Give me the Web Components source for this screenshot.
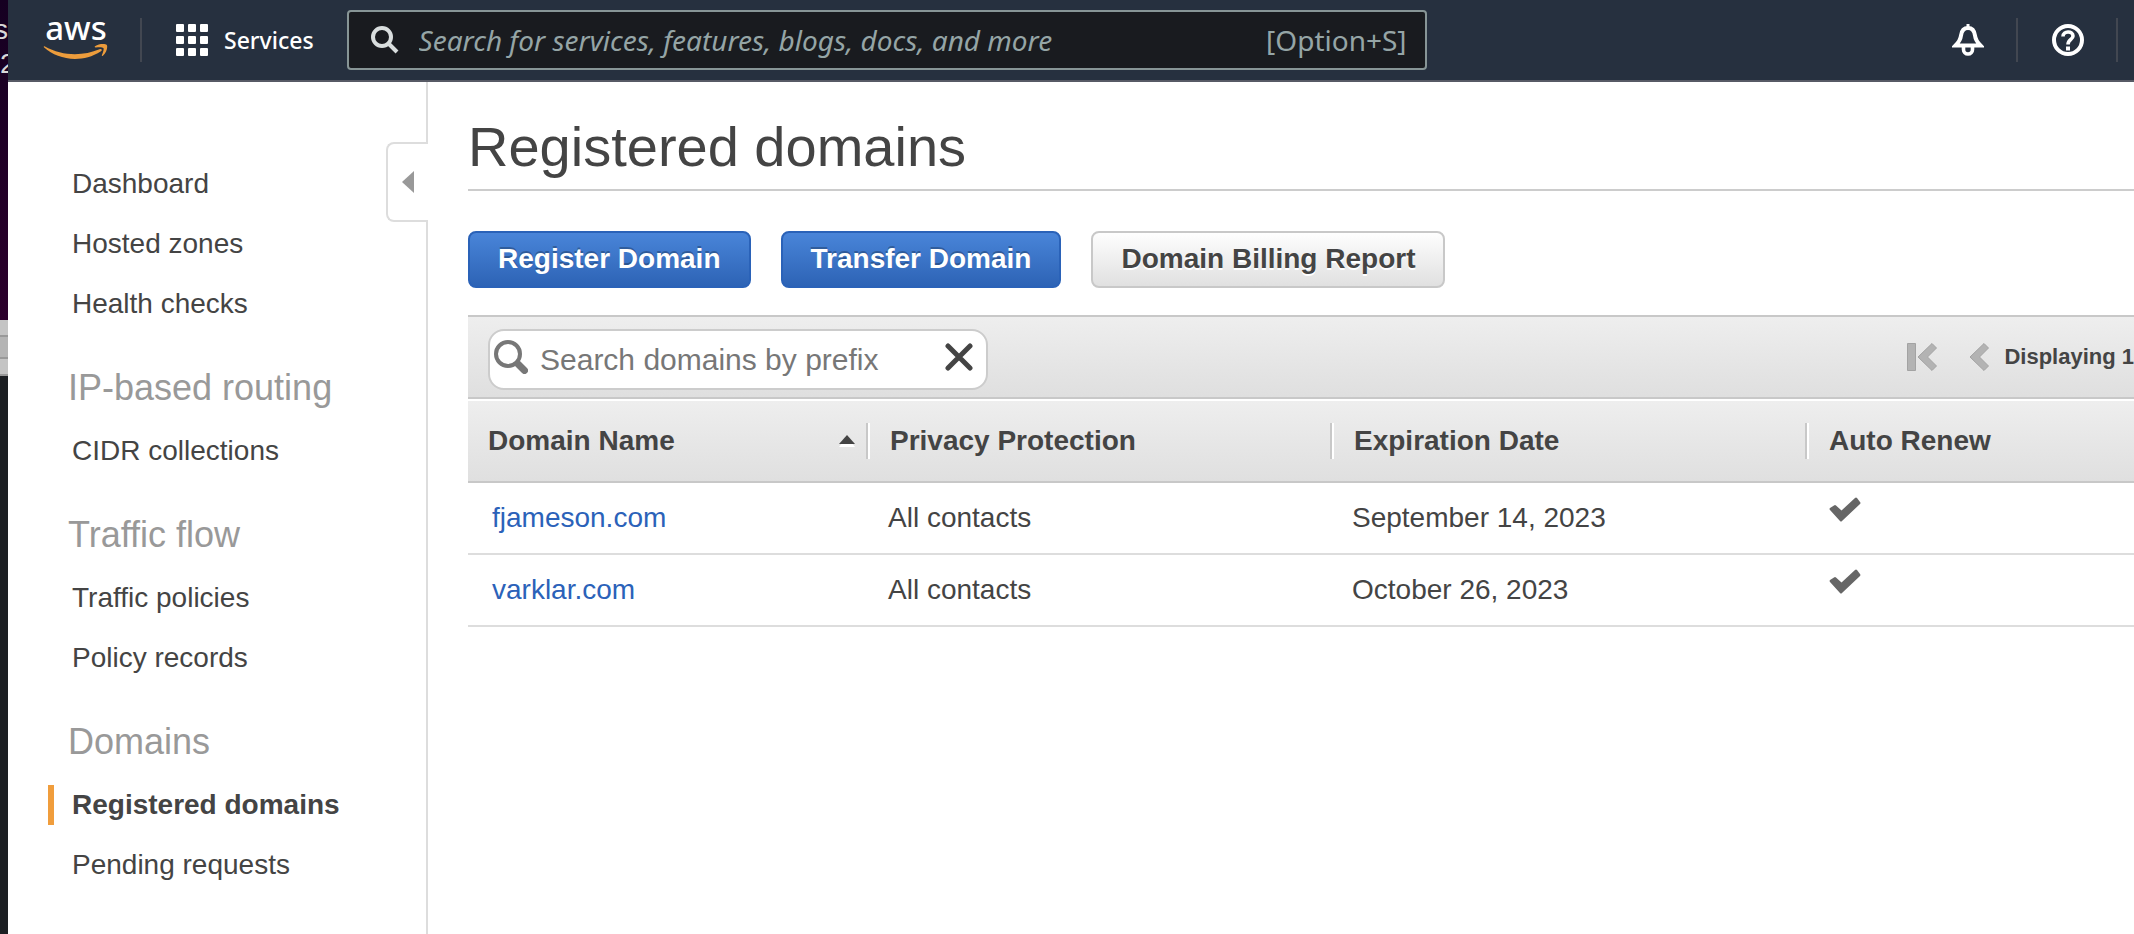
<!DOCTYPE html>
<html lang="en">
<head>
<meta charset="utf-8">
<title>Route 53 - Registered domains</title>
<style>
  html, body { margin: 0; }
  body {
    min-height: 100vh;
    overflow-x: hidden;
    background: #fff;
    color: #444;
    font: 28px/40px "Liberation Sans", Arial, sans-serif;
  }
</style>
</head>
<body>
<console-shell>
  <desktop-edge slot="edge"></desktop-edge>
  <top-bar slot="top"></top-bar>
  <side-nav slot="side">
    <nav-item>Dashboard</nav-item>
    <nav-item>Hosted zones</nav-item>
    <nav-item>Health checks</nav-item>
    <nav-heading>IP-based routing</nav-heading>
    <nav-item>CIDR collections</nav-item>
    <nav-heading>Traffic flow</nav-heading>
    <nav-item>Traffic policies</nav-item>
    <nav-item>Policy records</nav-item>
    <nav-heading>Domains</nav-heading>
    <nav-item current>Registered domains</nav-item>
    <nav-item>Pending requests</nav-item>
  </side-nav>
  <page-title>Registered domains</page-title>
  <button-row>
    <action-button primary>Register Domain</action-button>
    <action-button primary>Transfer Domain</action-button>
    <action-button>Domain Billing Report</action-button>
  </button-row>
  <table-toolbar></table-toolbar>
  <domain-table></domain-table>
</console-shell>

<script>
const define = (name, html, setup) => {
  const template = document.createElement('template');
  template.innerHTML = html;
  customElements.define(name, class extends HTMLElement {
    constructor() {
      super();
      this.attachShadow({ mode: 'open' }).append(template.content.cloneNode(true));
    }
    connectedCallback() { if (setup) setup(this, this.shadowRoot); }
  });
};

define('console-shell', `
<style>
  :host { display: grid; grid-template-columns: 8px 420px minmax(0, 1fr); grid-template-rows: auto 1fr; min-height: 100vh; }
  .edge { grid-row: 1 / 3; display: grid; }
  header { grid-column: 2 / 4; }
  .side { display: grid; }
  main { padding: 30px 0 40px 40px; min-width: 0; }
</style>
<div class="edge"><slot name="edge"></slot></div>
<header><slot name="top"></slot></header>
<div class="side"><slot name="side"></slot></div>
<main><slot></slot></main>`);

/* Sliver of the desktop that shows beside the browser window */
define('desktop-edge', `
<style>
  :host { display: flex; flex-direction: column; overflow: hidden; background: #1c1f23; }
  .terminal { height: 320px; box-sizing: border-box; padding-top: 13px; background: linear-gradient(#150021, #2c002c); color: #d8d8d8;
    font: 28px/34px "Liberation Sans", Arial, sans-serif; display: flex; flex-direction: column; align-items: flex-end; }
  .two { align-self: flex-start; }
  .bar { height: 54px; border-bottom: 2px solid #999; background: #c4c4c4; display: flex; align-items: center; }
  .bar i { flex: 1; height: 20px; border: solid #999; border-width: 2px 0; background: #b4b4b4; }
</style>
<div class="terminal"><span>s</span><span class="two">2</span></div>
<div class="bar"><i></i></div>`);

define('top-bar', `
<style>
  :host { display: flex; align-items: center; height: 80px; padding-left: 35px; background: #26303f; border-bottom: 2px solid #575a65;
    color: #fff; font-family: "Noto Sans", "Open Sans", sans-serif; }
  a, button { color: inherit; text-decoration: none; background: none; border: 0; padding: 0; font: inherit; display: flex; align-items: center; }
  svg { display: block; flex: none; }
  .logo { flex-direction: column; width: 66px; padding-bottom: 4px; font-size: 33px; line-height: 24px; font-weight: 500; }
  .logo span { height: 28px; }
  hr { width: 2px; height: 44px; margin: 0; border: 0; background: #424751; flex: none; }
  .logo + hr { margin: 0 34px 0 31px; }
  .services { gap: 16px; font-size: 23px; line-height: 32px; font-weight: 500; }
  .search { flex: 0 1 1080px; min-width: 0; display: flex; align-items: center; gap: 20px; height: 60px; margin-left: 33px; padding: 0 18px 0 22px; box-sizing: border-box;
    border: 2px solid #879596; border-radius: 4px; background: #191b1f; color: #95a5a6; }
  input { flex: 1; min-width: 0; border: 0; padding: 0; outline: 0; background: none; color: inherit; font: italic 28px/40px "Noto Sans", "Open Sans", sans-serif; }
  input::placeholder { color: inherit; opacity: 1; }
  kbd { font: 28px/40px "Noto Sans", "Open Sans", sans-serif; }
  .tools { margin-left: auto; padding-right: 16px; display: flex; align-items: center; gap: 32px; }
  .tools hr:first-of-type { margin-right: 2px; }
</style>
<a class="logo" href="#" aria-label="AWS home"><span>aws</span>
  <svg width="66" height="16" viewBox="0 0 66 16" fill="#ec9c3c"><path d="M1.500 2.200C20 12.500 40 12 56.500 5.200C58.500 4.500 59.800 6 58 7.300C49 13 41 15 32 15C20 15 9 10.500 1.200 3.600C.5 2.700 .8 1.900 1.500 2.200Z"/><path d="M52 2.300C56 -.5 62.500 -.3 63.800 .9C65 2.500 63.500 9 59.900 11.700C59.200 12.200 58.500 11.900 58.900 11.100C60 8.500 61.200 5 60.400 4C59.500 2.900 55.500 3.200 52.900 3.400C51.800 3.500 51.300 2.800 52 2.300Z"/></svg>
</a>
<hr>
<button class="services">
  <svg width="32" height="32" fill="#fff"><g id="r"><rect width="8" height="8" rx="1"/><rect x="12" width="8" height="8" rx="1"/><rect x="24" width="8" height="8" rx="1"/></g><use href="#r" y="12"/><use href="#r" y="24"/></svg>
  Services
</button>
<label class="search">
  <svg width="28" height="28" fill="none" stroke="#d9dede" stroke-width="4"><circle cx="11" cy="11" r="9"/><path d="M17 17L26 26"/></svg>
  <input type="search" aria-label="Search AWS" placeholder="Search for services, features, blogs, docs, and more">
  <kbd>[Option+S]</kbd>
</label>
<div class="tools">
  <button aria-label="Notifications">
    <svg width="32" height="32" fill="none" stroke="#fff" stroke-width="4"><path d="M16 0V4" stroke-width="3"/><path d="M16 4C11 4 9.500 7.500 9 11.500C8.500 16 7 18 3.500 21.500H28.500C25 18 23.500 16 23 11.500C22.500 7.500 21 4 16 4Z"/><path d="M11.500 23V25.500A4.500 4.500 0 0 0 20.500 25.500V23" stroke-width="3.600"/></svg>
  </button>
  <hr>
  <button aria-label="Help">
    <svg width="32" height="32" fill="none" stroke="#fff" stroke-width="4"><circle cx="16" cy="16" r="14"/><path d="M11 12.500C11 6.500 21 6.500 21 12C21 15.500 16 15.500 16 20.500" stroke-width="3.600"/><path d="M14 24.500H18"/></svg>
  </button>
  <hr>
</div>`);

define('side-nav', `
<style>
  :host { display: block; position: relative; border-right: 2px solid #ddd; }
  nav { padding: 72px 32px 20px 40px; }
  button { position: absolute; top: 60px; right: -2px; width: 42px; height: 80px; padding: 0 0 0 14px; box-sizing: border-box;
    border: 2px solid #ddd; border-right: 0; border-radius: 8px 0 0 8px; background: #fff; }
  svg { display: block; }
</style>
<nav aria-label="Route 53"><slot></slot></nav>
<button aria-label="Collapse navigation"><svg width="12" height="22" fill="#999"><path d="M12 0V22L0 11Z"/></svg></button>`);

define('nav-item', `
<style>
  :host { display: block; padding: 10px 0; }
  a { display: block; border-left: 6px solid transparent; padding-left: 18px; color: #444; text-decoration: none; line-height: 40px; white-space: nowrap; }
  :host([current]) a { border-color: #f09d3c; font-weight: bold; }
</style>
<a href="#"><slot></slot></a>`);

define('nav-heading', `
<style>
  :host { display: block; padding: 33px 0 12px 20px; }
  h2 { margin: 0; font-size: 36px; line-height: 42px; font-weight: normal; color: #999; white-space: nowrap; }
</style>
<h2><slot></slot></h2>`);

define('page-title', `
<style>
  :host { display: block; border-bottom: 2px solid #ccc; }
  h1 { margin: 0; padding-bottom: 7px; font-size: 56px; line-height: 70px; font-weight: normal; }
</style>
<h1><slot></slot></h1>`);

define('button-row', `
<style>:host { display: flex; flex-wrap: wrap; gap: 30px; padding: 40px 0 27px; }</style>
<slot></slot>`);

define('action-button', `
<style>
  :host { display: block; }
  button { display: block; padding: 8px 28px 9px; border: 2px solid #c8c8c8; border-radius: 8px; background: linear-gradient(#fff, #dfdfdf) border-box;
    color: #444; font: bold 28px/36px "Liberation Sans", Arial, sans-serif; text-shadow: 0 2px #fff; white-space: nowrap; }
  :host([primary]) button { border-color: #2a62b8; background: linear-gradient(#4a86da, #2c62b4) border-box; color: #fff; text-shadow: 0 -2px rgba(0, 0, 0, .25); }
</style>
<button><slot></slot></button>`);

define('table-toolbar', `
<style>
  :host { display: flex; align-items: center; justify-content: space-between; height: 80px; padding-left: 20px; border: solid #c8c8c8; border-width: 2px 0; margin-bottom: 2px;
    background: linear-gradient(#eee, #dfdfdf); }
  .filter { display: flex; align-items: center; gap: 12px; width: 500px; height: 61px; margin-top: 5px; box-sizing: border-box; padding: 0 13px 5px 4px;
    border: 2px solid #ccc; border-radius: 16px; background: #fff; }
  input { flex: 1; min-width: 0; height: 40px; border: 0; padding: 5px 0 0; outline: 0; background: none; color: #444; font: 30px/40px "Liberation Sans", Arial, sans-serif; }
  input::placeholder { color: #777; opacity: 1; }
  button { display: block; padding: 0; border: 0; background: none; }
  svg { display: block; }
  .pager { display: flex; align-items: center; gap: 15px; font-size: 22px; line-height: 30px; font-weight: bold; white-space: nowrap; }
  .pager button + button { margin-left: 17px; }
</style>
<label class="filter">
  <svg width="34" height="34" fill="none" stroke="#777" stroke-linecap="round"><circle cx="14" cy="14" r="12" stroke-width="4"/><path d="M24 24L30.500 30.500" stroke-width="7"/></svg>
  <input type="text" aria-label="Search domains" placeholder="Search domains by prefix">
  <button aria-label="Clear"><svg width="28" height="28" stroke="#444" stroke-width="5" stroke-linecap="round"><path d="M3 3L25 25M25 3L3 25"/></svg></button>
</label>
<div class="pager">
  <button aria-label="First page"><svg width="30" height="28" fill="#b3b3b3" stroke="#a3a3a3" stroke-width="1"><path d="M.5 .5H8.500V27.500H.5Z"/><path d="M25 .5L29.500 5L20.500 14L29.500 23L25 27.500L11 14Z"/></svg></button>
  <button aria-label="Previous page"><svg width="20" height="28" fill="#b3b3b3" stroke="#a3a3a3" stroke-width="1"><path d="M15 .5L19.500 5L10.500 14L19.500 23L15 27.500L1 14Z"/></svg></button>
  <span>Displaying 1</span>
</div>`);

const domains = [
  ['fjameson.com', 'All contacts', 'September 14, 2023'],
  ['varklar.com', 'All contacts', 'October 26, 2023'],
];

define('domain-table', `
<style>
  :host { display: block; }
  table { width: 100%; table-layout: fixed; border-collapse: separate; border-spacing: 0; text-align: left; }
  .name { width: 402px; } .privacy { width: 464px; } .expires { width: 475px; }
  thead tr { background: linear-gradient(#eee, #dfdfdf); }
  th, td { padding: 0; white-space: nowrap; }
  th { height: 80px; border-bottom: 2px solid #c8c8c8; }
  th div { display: flex; align-items: center; justify-content: space-between; height: 36px; padding: 0 13px 0 20px; }
  th:not(:last-child) div { border-right: 2px solid #fff; box-shadow: inset -2px 0 #c8c8c8; }
  td { height: 70px; padding-left: 18px; border-bottom: 2px solid #ddd; }
  td:first-child { padding-left: 24px; }
  td:last-child { padding: 14px 0 0 20px; height: 56px; vertical-align: top; }
  a { color: #2b62b9; text-decoration: none; }
  svg { display: block; }
</style>
<table>
  <colgroup><col class="name"><col class="privacy"><col class="expires"><col></colgroup>
  <thead><tr>
    <th scope="col" aria-sort="ascending"><div>Domain Name <svg width="16" height="12"><path d="M8 2L16 12H0Z" fill="#fff"/><path d="M8 0L16 9H0Z" fill="#444"/></svg></div></th>
    <th scope="col"><div>Privacy Protection</div></th>
    <th scope="col"><div>Expiration Date</div></th>
    <th scope="col"><div>Auto Renew</div></th>
  </tr></thead>
  <tbody></tbody>
</table>`, (host, root) => {
  const check = '<svg width="32" height="25" fill="#666" role="img" aria-label="On"><path d="M1 11Q0 12 1 13L11 24Q12 25 13 24L31 7Q32 6 31 5L28 1Q27 0 26 1L12.500 13.500L7 8.500Q6 7.500 5 8.500Z"/></svg>';
  root.querySelector('tbody').innerHTML = domains.map(([name, privacy, expires]) =>
    `<tr><td><a href="#">${name}</a></td><td>${privacy}</td><td>${expires}</td><td>${check}</td></tr>`).join('');
});
</script>
</body>
</html>
